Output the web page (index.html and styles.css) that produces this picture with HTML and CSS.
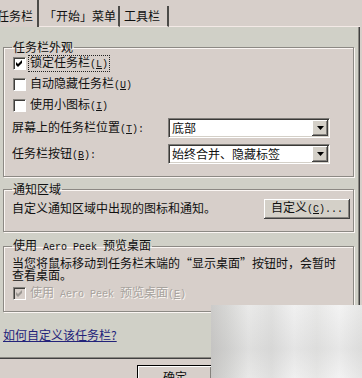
FILE: index.html
```html
<!DOCTYPE html>
<html lang="zh-CN">
<head>
  <meta charset="UTF-8">
  <meta name="viewport" content="width=device-width, initial-scale=1.0">
  <title>任务栏和「开始」菜单属性</title>
  <link rel="stylesheet" href="styles.css">
</head>
<body>
  <div class="tabs">
    <div class="tab tab-active">任务栏</div>
    <div class="tab tab-start">「开始」菜单</div>
    <div class="tab tab-tools">工具栏</div>
    <div class="tab-fill"></div>
  </div>

  <div class="panel">
    <fieldset class="group group-look">
      <legend>任务栏外观</legend>
      <div class="check">
        <span class="box"><svg width="7" height="7" viewBox="0 0 7 7"><polygon points="0,2 2,4 6,0 6,3 2,7 0,5" fill="#000"/></svg></span>
        <span class="check-text focus">锁定任务栏<span class="en">(<u>L</u>)</span></span>
      </div>
      <div class="check">
        <span class="box"></span>
        <span class="check-text">自动隐藏任务栏<span class="en">(<u>U</u>)</span></span>
      </div>
      <div class="check">
        <span class="box"></span>
        <span class="check-text">使用小图标<span class="en">(<u>I</u>)</span></span>
      </div>
      <div class="row row-first">
        <span class="row-label">屏幕上的任务栏位置<span class="en">(<u>T</u>):</span></span>
        <div class="select">
          <span class="select-value">底部</span>
          <span class="select-arrow"><svg width="7" height="4" viewBox="0 0 7 4"><polygon points="0,0 7,0 3.5,4" fill="#000"/></svg></span>
        </div>
      </div>
      <div class="row row-second">
        <span class="row-label">任务栏按钮<span class="en">(<u>B</u>):</span></span>
        <div class="select">
          <span class="select-value">始终合并、隐藏标签</span>
          <span class="select-arrow"><svg width="7" height="4" viewBox="0 0 7 4"><polygon points="0,0 7,0 3.5,4" fill="#000"/></svg></span>
        </div>
      </div>
    </fieldset>

    <fieldset class="group group-notify">
      <legend>通知区域</legend>
      <div class="row notify-row">
        <span>自定义通知区域中出现的图标和通知。</span>
        <button class="btn btn-custom">自定义<span class="en">(<u>C</u>)...</span></button>
      </div>
    </fieldset>

    <fieldset class="group group-peek">
      <legend>使用<span class="en"> Aero Peek </span>预览桌面</legend>
      <p class="peek-text">当您将鼠标移动到任务栏末端的“显示桌面”按钮时，会暂时<br>查看桌面。</p>
      <div class="check check-disabled">
        <span class="box"><svg width="7" height="7" viewBox="0 0 7 7"><polygon points="0,2 2,4 6,0 6,3 2,7 0,5" fill="#9c9893"/></svg></span>
        <span class="check-text">使用<span class="en"> Aero Peek </span>预览桌面<span class="en">(<u>E</u>)</span></span>
      </div>
    </fieldset>

    <a class="help" href="#">如何自定义该任务栏?</a>
  </div>

  <div class="footer">
    <button class="btn btn-ok">确定</button>
  </div>

  <div class="smudge"></div>
</body>
</html>
```

FILE: styles.css
```css
*{box-sizing:border-box;}
body{position:relative; width:362px; height:378px; margin:0; overflow:hidden; background-color:#d7cfca; color:#111; font:12px/14px "Noto Sans CJK SC", sans-serif;}
.en{font-family:"Liberation Mono", monospace; font-size:10px;}
u{text-decoration:underline;}

/* tabs */
.tabs{display:flex; align-items:flex-end; height:27px;}
.tab{height:21px; padding:3px 0 0 5px; border-right:2px solid #4c4b48; border-bottom:1px solid #f3e9e6; white-space:nowrap;}
.tab-active{width:39px; height:27px; padding:9px 0 0 0; text-indent:-3px; overflow:hidden; border-bottom:0;}
.tab-start{width:81px;}
.tab-tools{width:49px; padding-left:4px;}
.tab-fill{flex:1; height:1px; margin-right:2px; background-color:#f3e9e6;}

/* panel */
.panel{width:360px; height:332px; padding:13px 0 0 3px; background-color:#d0d0c7; border-right:1px solid #404040; border-bottom:1px solid #404040; box-shadow:inset -1px -1px #8a8882;}

.group{width:351px; margin:0; padding:0 3px 0 8px; border:1px solid #8c8984; box-shadow:inset 1px 1px #fbf6f3, 1px 1px #fbf6f3; background-color:#d7cfca;}
.group legend{padding:0 1px; line-height:14px;}
.group-look{padding-bottom:12px;}
.group-notify{margin-top:5px; padding-bottom:13px;}
.group-peek{margin-top:6px; padding-bottom:7px;}

/* check boxes */
.check{display:flex; align-items:center; height:21px;}
.group-look .check:first-of-type{margin-top:-1px;}
.box{display:flex; align-items:center; justify-content:center; width:13px; height:13px; margin-left:1px; background-color:#fff; border:1px solid; border-color:#85827d #fff #fff #85827d; box-shadow:inset 1px 1px #3f3e3c;}
.check-text{margin-left:2px; padding:0 1px; line-height:12px; border:1px solid transparent;}
.focus{border:1px dotted #222;}
.check-disabled{margin-top:2px;}
.check-disabled .box{background-color:#d7cfca;}
.check-disabled .check-text{color:#a7a39e; text-shadow:1px 1px #fbf7f4;}

/* rows with selects */
.row{display:flex; align-items:center; height:20px;}
.row-first{margin-top:2px;}
.row-second{margin-top:6px;}
.row-label{width:156px; white-space:nowrap;}
.select{display:flex; align-items:center; width:162px; height:20px; padding:0 0 0 2px; background-color:#fff; border:1px solid; border-color:#7d7b77 #fff #fff #7d7b77; box-shadow:inset 1px 1px #3a3937, inset -1px -1px #d4d0c8;}
.select-value{flex:1; padding-left:1px;}
.select-arrow{display:flex; align-items:center; justify-content:center; width:16px; height:16px; margin:0 1px 0 0; background-color:#d4d0c8; box-shadow:inset -1px -1px #404040, inset 1px 1px #fff, inset -2px -2px #85827d;}

/* notification row */
.notify-row{margin-top:2px; justify-content:space-between;}
.btn{padding:0; background-color:#d4d0c8; color:#111; font:12px/14px "Noto Sans CJK SC", sans-serif; border:0; box-shadow:inset -1px -1px #404040, inset 1px 1px #fff, inset -2px -2px #85827d;}
.btn-custom{width:86px; height:20px; margin-top:1px;}

.peek-text{margin:2px 0 0 0; line-height:12px;}

.help{display:inline-block; margin-top:16px; color:#23237a; text-decoration:underline;}

/* footer */
.footer{padding:6px 0 0 137px;}
.btn-ok{width:76px; height:23px; border:1px solid #000; background-color:#d7cfca; padding-top:1px;}

/* blurred watermark in the corner */
.smudge{position:absolute; left:211px; top:305px; width:151px; height:73px; background:linear-gradient(180deg, rgba(255,255,255,0.15), rgba(200,200,200,0.25) 60%, rgba(255,255,255,0.1)), linear-gradient(90deg, #c3c2c0 0, #cfcfcd 10%, #e6e6e5 25%, #dcdcdb 40%, #eeeeee 55%, #e4e4e3 70%, #f1f1f1 85%, #e2e2e1 100%);}
```
